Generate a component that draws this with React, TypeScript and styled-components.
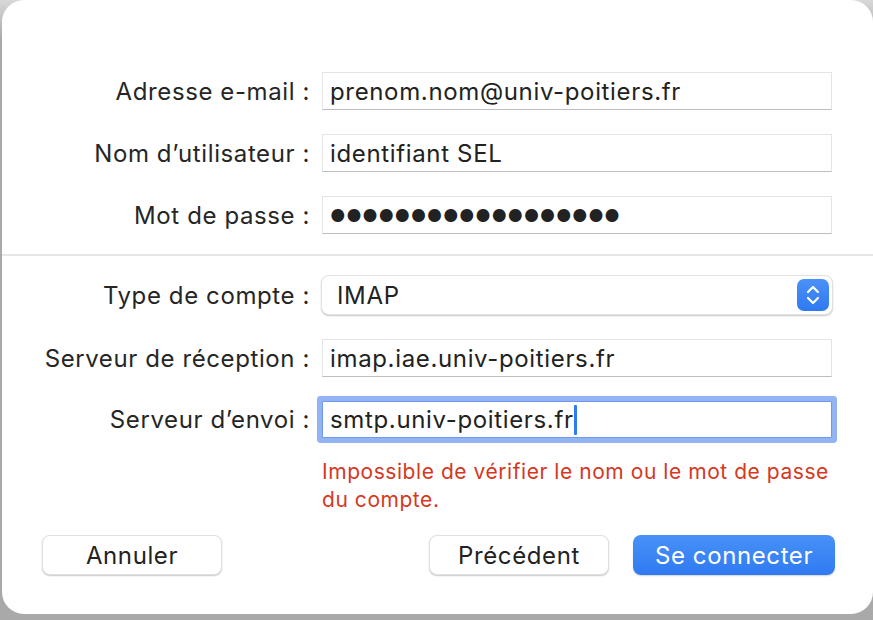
import React from 'react';
import styled, { createGlobalStyle } from 'styled-components';

const GlobalStyle = createGlobalStyle`
  html, body {
    margin: 0;
    padding: 0;
    background: #a9a9a9;
  }
  body {
    font-family: 'Inter', 'Liberation Sans', sans-serif;
    color: #262626;
  }
`;

const Backdrop = styled.div`
  width: 873px;
  height: 620px;
  background: linear-gradient(#d8d8d8, #a9a9a9 40px);
  overflow: hidden;
`;

const Sheet = styled.div`
  margin-left: 2px;
  width: 871px;
  height: 614px;
  background: #ffffff;
  border-radius: 22px;
  box-sizing: border-box;
  padding-top: 72px;
  display: flex;
  flex-direction: column;
`;

const FormGrid = styled.div`
  display: grid;
  grid-template-columns: 308px 510px;
  column-gap: 12px;
  row-gap: 24px;
  align-items: center;
`;

const Label = styled.label`
  text-align: right;
  font-size: 24px;
  letter-spacing: 0.6px;
  color: #262626;
  white-space: nowrap;
`;

const Field = styled.div<{ $focused?: boolean }>`
  position: relative;
  height: 38px;
  box-sizing: border-box;
  background: #ffffff;
  border: 1px solid #e4e4e4;
  border-bottom: 1px solid #bdbdbd;
  padding: 0 7px;
  display: flex;
  align-items: center;
  font-size: 24px;
  letter-spacing: 0.65px;
  color: #222222;
  white-space: nowrap;
  ${({ $focused }) =>
    $focused &&
    `
    height: 37px;
    border: 1px solid #6f98ea;
    box-shadow: 0 0 0 5px #93b4f3;
    border-radius: 1px;
  `}
`;

const Dots = styled.span`
  font-size: 17px;
  letter-spacing: 0.6px;
  color: #222222;
  padding-top: 1px;
`;

const Caret = styled.span`
  display: inline-block;
  width: 3px;
  height: 30px;
  background: #2f7bf2;
  border-radius: 1px;
`;

const Divider = styled.div`
  height: 2px;
  background: #e6e6e6;
  margin: 20px 0 19px;
`;

const SelectBox = styled.div`
  height: 40px;
  margin: 0 -1px;
  box-sizing: border-box;
  border-radius: 8px;
  background: #ffffff;
  border: 1px solid #e2e2e2;
  box-shadow: 0 1px 1.5px rgba(0, 0, 0, 0.22);
  display: flex;
  align-items: center;
  justify-content: space-between;
  padding: 0 3px 0 15px;
  font-size: 24px;
  letter-spacing: 0.65px;
  color: #222222;
`;

const Stepper = styled.div`
  width: 32px;
  height: 32px;
  border-radius: 7px;
  background: linear-gradient(#4b91f8, #2f79f1);
  display: flex;
  align-items: center;
  justify-content: center;
`;

const ErrorText = styled.div`
  grid-column: 2;
  margin-top: -4px;
  font-size: 21px;
  letter-spacing: 0.55px;
  line-height: 28px;
  color: #d5381f;
  width: 515px;
`;

const ButtonBar = styled.div`
  display: flex;
  align-items: center;
  gap: 24px;
  padding: 0 38px 0 40px;
  margin-top: 21px;
`;

const Spacer = styled.div`
  flex: 1;
`;

const Button = styled.button<{ $primary?: boolean; $w: number }>`
  width: ${({ $w }) => $w}px;
  height: 40px;
  border-radius: 8px;
  font-family: inherit;
  font-size: 24px;
  letter-spacing: 0.6px;
  cursor: pointer;
  ${({ $primary }) =>
    $primary
      ? `
    background: linear-gradient(#4891f8, #2f7af2);
    color: #ffffff;
    border: none;
    box-shadow: 0 1px 1.5px rgba(0,0,0,0.18);
  `
      : `
    background: #ffffff;
    color: #222222;
    border: 1px solid #e0e0e0;
    box-shadow: 0 1px 1.5px rgba(0,0,0,0.22);
  `}
`;

const ChevronPair = () => (
  <svg width="16" height="22" viewBox="0 0 16 22" fill="none">
    <path d="M3 8 L8 3 L13 8" stroke="#fff" strokeWidth="2.2" strokeLinecap="round" strokeLinejoin="round" />
    <path d="M3 14 L8 19 L13 14" stroke="#fff" strokeWidth="2.2" strokeLinecap="round" strokeLinejoin="round" />
  </svg>
);

export default function App() {
  return (
    <>
      <GlobalStyle />
      <Backdrop>
        <Sheet>
          <FormGrid>
            <Label>Adresse e-mail :</Label>
            <Field>prenom.nom@univ-poitiers.fr</Field>
            <Label>Nom d’utilisateur :</Label>
            <Field>identifiant SEL</Field>
            <Label>Mot de passe :</Label>
            <Field>
              <Dots>{'●'.repeat(18)}</Dots>
            </Field>
          </FormGrid>
          <Divider />
          <FormGrid>
            <Label>Type de compte :</Label>
            <SelectBox>
              <span>IMAP</span>
              <Stepper>
                <ChevronPair />
              </Stepper>
            </SelectBox>
            <Label>Serveur de réception :</Label>
            <Field>imap.iae.univ-poitiers.fr</Field>
            <Label>Serveur d’envoi :</Label>
            <Field $focused>
              smtp.univ-poitiers.fr
              <Caret />
            </Field>
            <ErrorText>Impossible de vérifier le nom ou le mot de passe du compte.</ErrorText>
          </FormGrid>
          <ButtonBar>
            <Button $w={180}>Annuler</Button>
            <Spacer />
            <Button $w={180}>Précédent</Button>
            <Button $w={202} $primary>
              Se connecter
            </Button>
          </ButtonBar>
        </Sheet>
      </Backdrop>
    </>
  );
}
